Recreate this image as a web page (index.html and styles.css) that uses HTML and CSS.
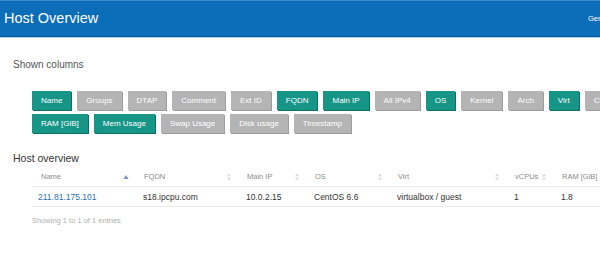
FILE: index.html
```html
<!DOCTYPE html>
<html>
<head>
<meta charset="utf-8">
<title>Host Overview</title>
<link rel="stylesheet" href="styles.css">
</head>
<body>
<div class="page">
  <header class="topbar">
    <h1 class="title">Host Overview</h1>
    <span class="meta">Generated by ansible-cmdb</span>
  </header>

  <main class="content">
    <p class="label">Shown columns</p>
    <div class="cols">
      <span class="btn on">Name</span>
      <span class="btn">Groups</span>
      <span class="btn">DTAP</span>
      <span class="btn">Comment</span>
      <span class="btn">Ext ID</span>
      <span class="btn on">FQDN</span>
      <span class="btn on">Main IP</span>
      <span class="btn">All IPv4</span>
      <span class="btn on">OS</span>
      <span class="btn">Kernel</span>
      <span class="btn">Arch</span>
      <span class="btn on">Virt</span>
      <span class="btn">CPU Model</span>
      <span class="btn on">RAM [GiB]</span>
      <span class="btn on">Mem Usage</span>
      <span class="btn">Swap Usage</span>
      <span class="btn">Disk usage</span>
      <span class="btn">Timestamp</span>
    </div>

    <h2 class="section">Host overview</h2>
    <div class="table">
      <div class="row head">
        <div class="th"><span>Name</span><svg class="sort" viewBox="0 0 6 8"><path d="M3 2 L5.5 6 L0.5 6 Z" fill="#7f92c9"/></svg></div>
        <div class="th"><span>FQDN</span><svg class="sort" viewBox="0 0 6 8"><path d="M3 0.5 L5 3.3 L1 3.3 Z M3 7.5 L5 4.7 L1 4.7 Z" fill="#dcdcdc"/></svg></div>
        <div class="th"><span>Main IP</span><svg class="sort" viewBox="0 0 6 8"><path d="M3 0.5 L5 3.3 L1 3.3 Z M3 7.5 L5 4.7 L1 4.7 Z" fill="#dcdcdc"/></svg></div>
        <div class="th"><span>OS</span><svg class="sort" viewBox="0 0 6 8"><path d="M3 0.5 L5 3.3 L1 3.3 Z M3 7.5 L5 4.7 L1 4.7 Z" fill="#dcdcdc"/></svg></div>
        <div class="th"><span>Virt</span><svg class="sort" viewBox="0 0 6 8"><path d="M3 0.5 L5 3.3 L1 3.3 Z M3 7.5 L5 4.7 L1 4.7 Z" fill="#dcdcdc"/></svg></div>
        <div class="th"><span>vCPUs</span><svg class="sort" viewBox="0 0 6 8"><path d="M3 0.5 L5 3.3 L1 3.3 Z M3 7.5 L5 4.7 L1 4.7 Z" fill="#dcdcdc"/></svg></div>
        <div class="th"><span>RAM [GiB]</span><svg class="sort" viewBox="0 0 6 8"><path d="M3 0.5 L5 3.3 L1 3.3 Z M3 7.5 L5 4.7 L1 4.7 Z" fill="#dcdcdc"/></svg></div>
      </div>
      <div class="row body">
        <div class="td first"><a class="link" href="#">211.81.175.101</a></div>
        <div class="td">s18.ipcpu.com</div>
        <div class="td">10.0.2.15</div>
        <div class="td">CentOS 6.6</div>
        <div class="td">virtualbox / guest</div>
        <div class="td">1</div>
        <div class="td">1.8</div>
      </div>
    </div>
    <p class="info">Showing 1 to 1 of 1 entries</p>
  </main>
</div>
</body>
</html>
```

FILE: styles.css
```css
html, body {
  margin: 0;
  padding: 0;
  background: #ffffff;
  overflow: hidden;
}

body {
  font-family: "Liberation Sans", Arial, sans-serif;
  color: #333333;
}

.page {
  width: 720px;
}

.topbar {
  display: flex;
  align-items: center;
  height: 35px;
  background: #0c6db8;
  border-top: 1px solid #3f8bcc;
  border-bottom: 1px solid #075a9b;
  box-shadow: 0 1px 0 #a9d6f3;
}

.title {
  flex: 0 0 584px;
  margin: 0;
  padding-left: 4px;
  font-size: 14.5px;
  font-weight: normal;
  color: #ffffff;
  line-height: 35px;
}

.meta {
  font-size: 7.5px;
  color: #ffffff;
  white-space: nowrap;
}

.content {
  padding: 0 13px;
}

.label {
  margin: 22px 0 0;
  font-size: 10px;
  line-height: 12px;
  color: #555555;
}

.cols {
  width: 640px;
  margin: 20px 0 0 19px;
  display: flex;
  flex-wrap: wrap;
  column-gap: 6px;
  row-gap: 4px;
}

.btn {
  height: 19px;
  line-height: 19px;
  padding: 0 9px;
  font-size: 8px;
  color: #ffffff;
  background: #b4b4b4;
  box-shadow: 1px 1px 0 #9c9c9c;
  white-space: nowrap;
}

.btn.on {
  background: #179587;
  box-shadow: 1px 1px 0 #0f6f64;
}

.section {
  margin: 19px 0 0;
  font-size: 10.5px;
  font-weight: normal;
  line-height: 13px;
  color: #333333;
}

.table {
  margin: 2px 0 0 19px;
  width: 640px;
}

.row {
  display: grid;
  grid-template-columns: 103px 103px 68px 83px 117px 47px 119px;
  border-bottom: 1px solid #ececec;
}

.row.head {
  height: 19px;
}

.row.body {
  height: 19px;
}

.th {
  display: flex;
  align-items: center;
  justify-content: space-between;
  padding: 0 6px 0 9px;
  font-size: 7.5px;
  color: #8c8c8c;
}

.sort {
  width: 6px;
  height: 8px;
}

.td {
  display: flex;
  align-items: center;
  padding: 0 0 0 8px;
  font-size: 8.5px;
  color: #333333;
  white-space: nowrap;
}

.td.first {
  padding-left: 6px;
}

.link {
  color: #2a6fb5;
  text-decoration: none;
}

.info {
  margin: 9px 0 0 19px;
  font-size: 7.5px;
  line-height: 10px;
  color: #b0b0b0;
}
```
